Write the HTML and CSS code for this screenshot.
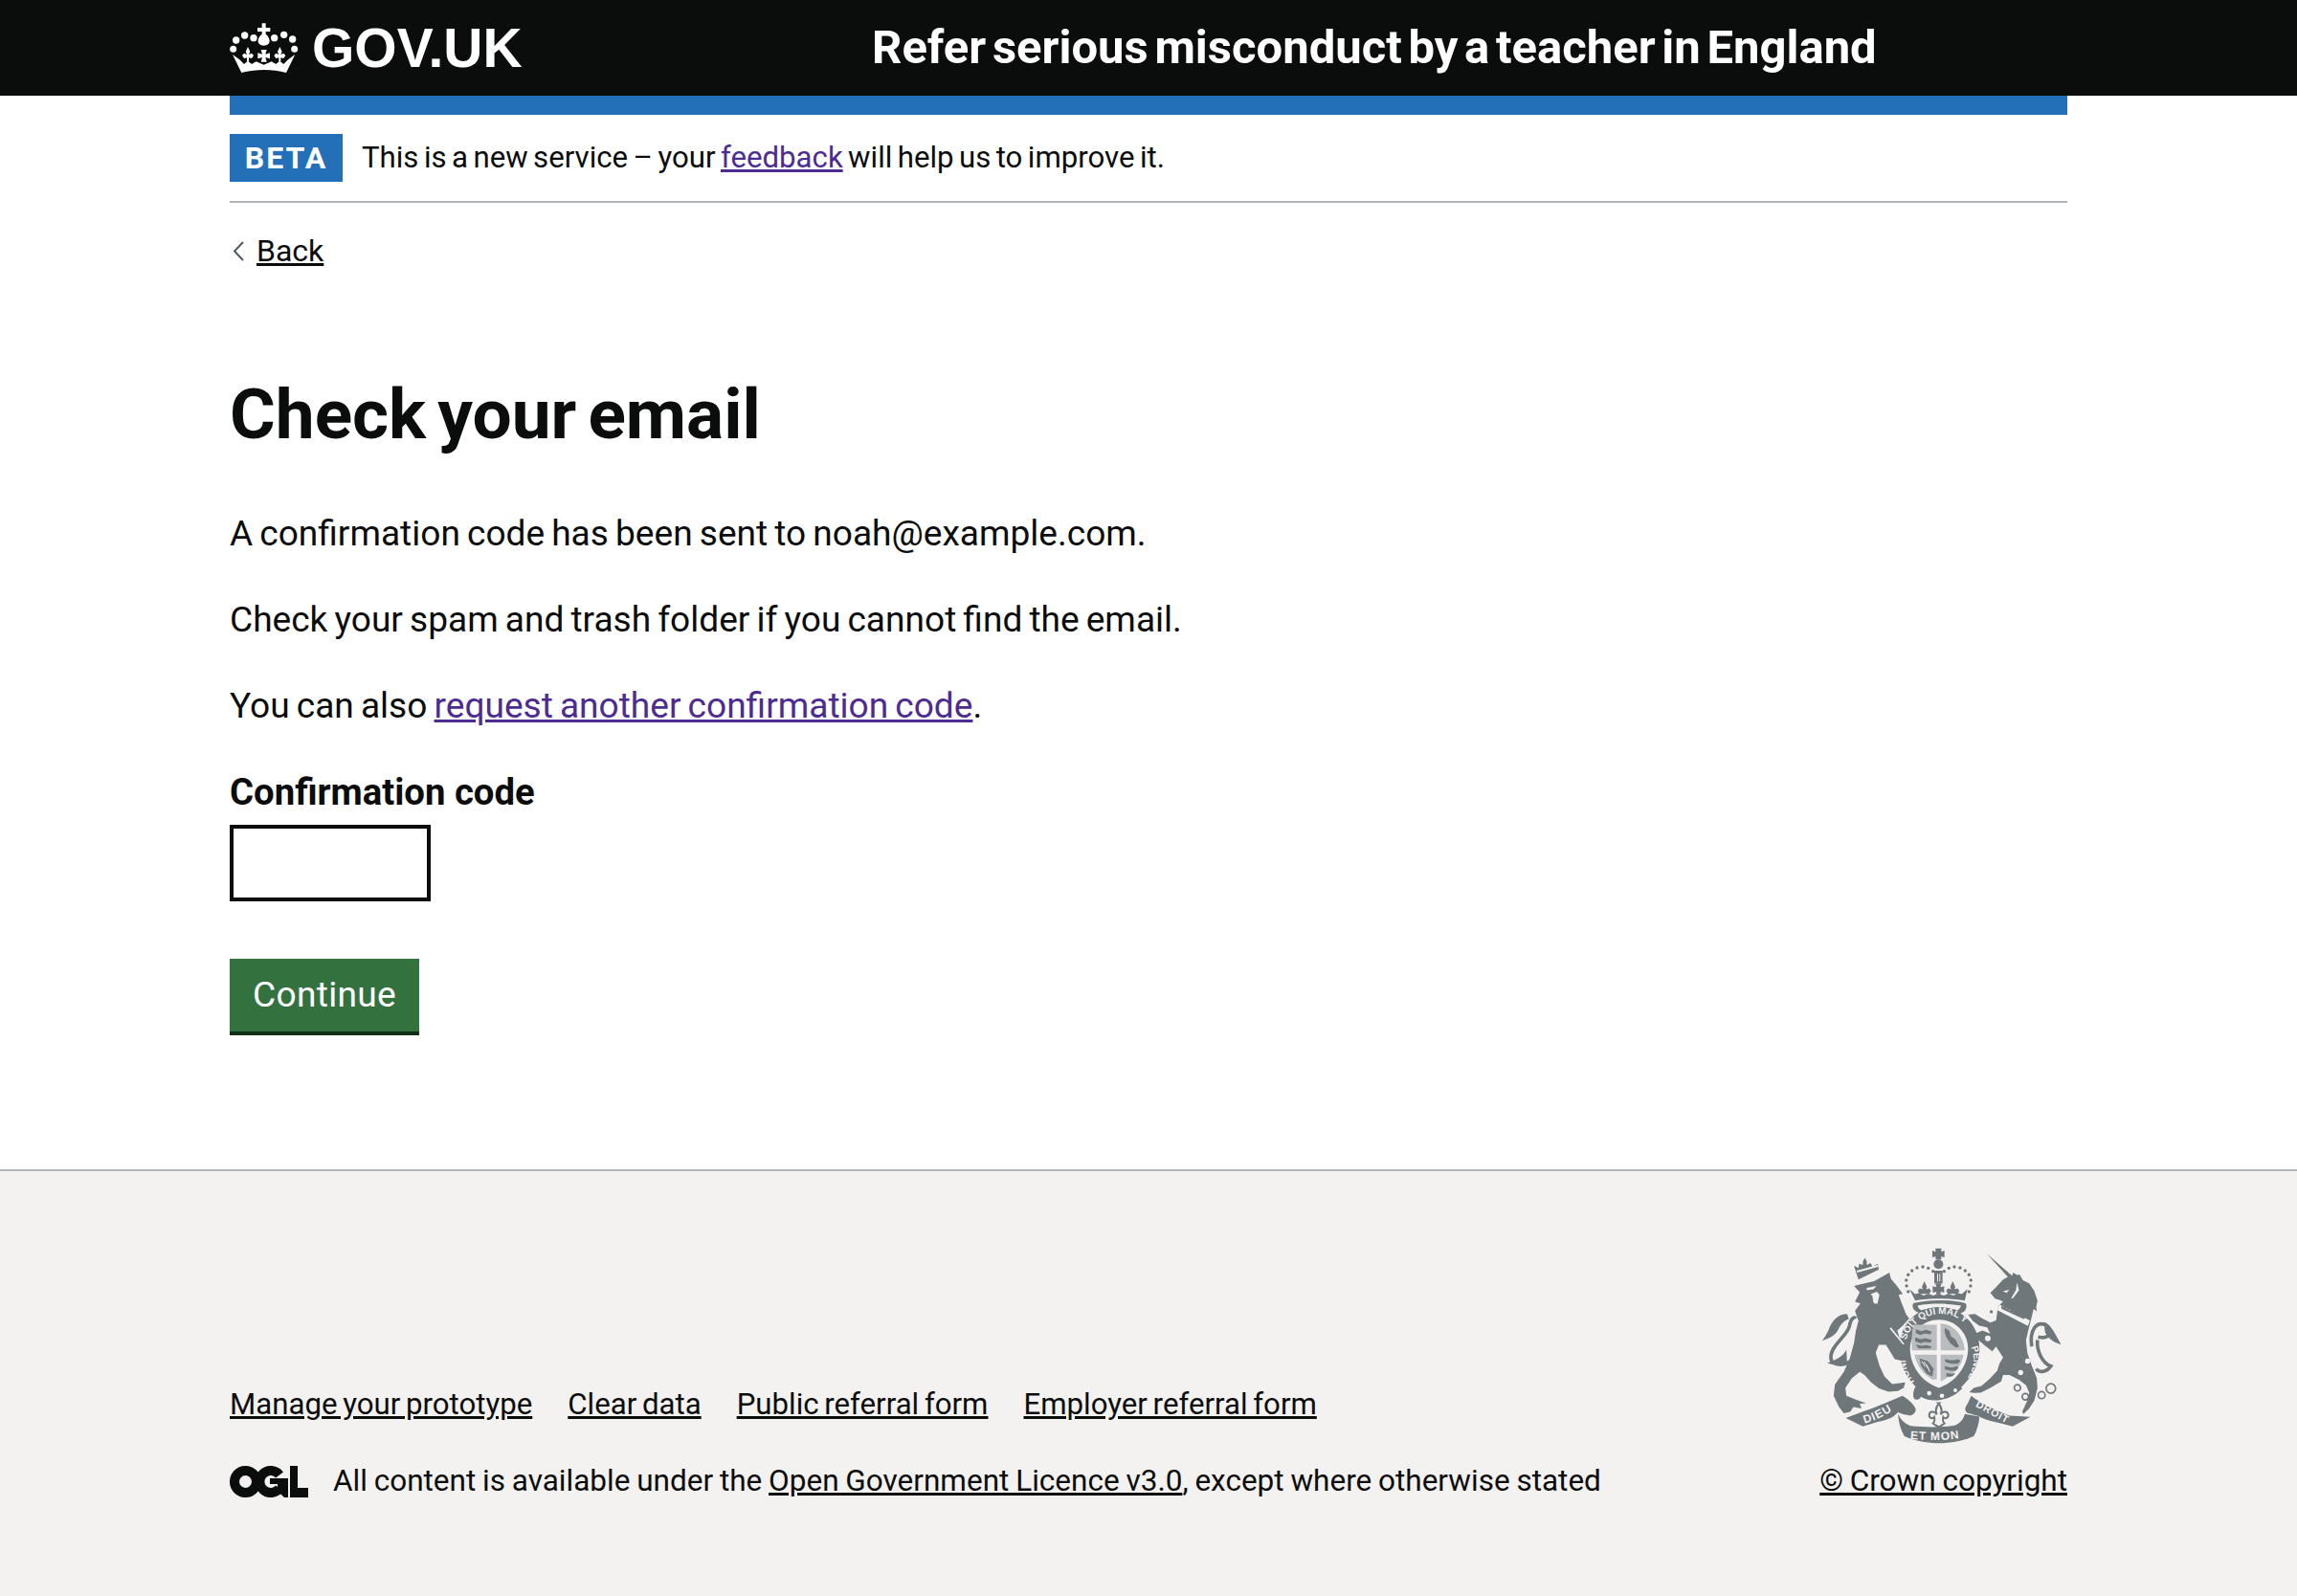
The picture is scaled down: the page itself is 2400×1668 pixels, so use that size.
FILE: index.html
```html
<!DOCTYPE html>
<html lang="en">
<head>
    <meta charset="UTF-8">
    <title>Check your email - Refer serious misconduct by a teacher in England</title>
    <link rel="stylesheet" href="styles.css">
</head>
<body>

    <header class="site-header">
        <div class="wrap header-row">
            <a class="logo" href="#">
                <svg class="crown" viewBox="15 21 216 156" aria-hidden="true">
                    <circle cx="35" cy="75" r="11"/><circle cx="62" cy="60" r="11"/><circle cx="90" cy="68" r="11"/>
                    <circle cx="155" cy="68" r="11"/><circle cx="185" cy="58" r="11"/><circle cx="212" cy="72" r="11"/>
                    <circle cx="26" cy="103" r="10.500"/><circle cx="218" cy="103" r="10.500"/>
                    <path d="M116 22h12v14h14v12h-14v8c8 6 12 14 12 22 0 8-8 14-18 14s-18-6-18-14c0-8 4-16 12-22v-8h-14V36h14z"/>
                    <path d="M52 177C95 165 150 165 192 177L220 120 198 136 184 150 172 140 160 150 146 142 136 146 122 152 108 146 98 142 84 150 72 140 60 150 46 136 24 120Z"/>
                    <path d="M72 96l7 15-4 9 9-4 6 7-6 9-9-2v12h-6v-12l-9 2-6-9 6-7 9 4-4-9z"/>
                    <path d="M172 96l7 15-4 9 9-4 6 7-6 9-9-2v12h-6v-12l-9 2-6-9 6-7 9 4-4-9z"/>
                    <path d="M113 105h18l-4 14 14-4v18l-14-4 4 14h-18l4-14-14 4v-18l14 4z"/>
                </svg>
                <span>GOV.UK</span>
            </a>
            <a class="service-name" href="#">Refer serious misconduct by a teacher in England</a>
        </div>
    </header>

    <div class="wrap">
        <div class="blue-bar"></div>
        <div class="phase-banner">
            <strong class="tag">BETA</strong>
            <span>This is a new service – your <a class="link" href="#">feedback</a> will help us to improve it.</span>
        </div>
        <div class="back">
            <svg class="chevron" viewBox="0 0 12 21" aria-hidden="true"><path d="M11 1 2 10.500 11 20"/></svg>
            <a href="#">Back</a>
        </div>

        <main class="content">
            <h1>Check your email</h1>
            <p>A confirmation code has been sent to noah@example.com.</p>
            <p>Check your spam and trash folder if you cannot find the email.</p>
            <p>You can also <a class="link" href="#">request another confirmation code</a>.</p>
            <form>
                <label for="code">Confirmation code</label>
                <input type="text" id="code" name="code">
                <button type="submit">Continue</button>
            </form>
        </main>
    </div>

    <footer class="site-footer">
        <div class="wrap footer-row">
            <div class="footer-main">
                <ul class="footer-links">
                    <li><a href="#">Manage your prototype</a></li>
                    <li><a href="#">Clear data</a></li>
                    <li><a href="#">Public referral form</a></li>
                    <li><a href="#">Employer referral form</a></li>
                </ul>
                <div class="licence">
                    <svg class="ogl" viewBox="0 0 82 33" aria-hidden="true">
                        <circle class="ogl-ring" cx="16.500" cy="16.500" r="11.500"/>
                        <path class="ogl-ring" d="M52 9.500A11.500 11.500 0 1 0 52 23.500"/>
                        <path d="M42 13h19v20h-4l-3-3-4-2v-9h-8z"/>
                        <path d="M63 0h8v23h11v10H63z"/>
                    </svg>
                    <span>All content is available under the <a href="#">Open Government Licence v3.0</a>, except where otherwise stated</span>
                </div>
            </div>
            <div class="footer-crest">
                <svg class="crest" viewBox="70 40 756 616" aria-hidden="true">
                    <!-- royal crown -->
                    <path d="M428 42h18v11l10-4v22l-10-4v10h-18V67l-10 4V49l10 4z"/>
                    <circle cx="437" cy="92" r="15"/>
                    <path d="M424 112h26v40h-26z"/>
                    <path class="crest-light" d="M433 122h3v24h-3zM440 122h3v24h-3z"/>
                    <g>
                        <circle cx="342" cy="178" r="5"/><circle cx="337" cy="160" r="5"/><circle cx="336" cy="142" r="5"/><circle cx="342" cy="125" r="5"/><circle cx="354" cy="112" r="5"/><circle cx="370" cy="103" r="5"/><circle cx="388" cy="100" r="5"/><circle cx="405" cy="104" r="5"/><circle cx="420" cy="114" r="5"/>
                        <circle cx="455" cy="114" r="5"/><circle cx="470" cy="104" r="5"/><circle cx="487" cy="100" r="5"/><circle cx="505" cy="103" r="5"/><circle cx="521" cy="112" r="5"/><circle cx="533" cy="125" r="5"/><circle cx="539" cy="142" r="5"/><circle cx="538" cy="160" r="5"/><circle cx="533" cy="178" r="5"/>
                    </g>
                    <path d="M393 145l8 18-3 8 10-3 6 7-6 10h-30l-6-10 6-7 10 3-3-8zM482 145l8 18-3 8 10-3 6 7-6 10h-30l-6-10 6-7 10 3-3-8zM427 152h20l-4 12 12-3v20l-12-3 2 8h-16l2-8-12 3v-20l12 3z"/>
                    <path d="M346 170l18 16 12-4 14 8 16-6 14 6 17-6 17 6 14-6 16 6 14-8 12 4 18-16-8 36c-50-8-110-8-156 0z"/>
                    <path d="M358 214c50-12 112-12 164 0 6 8 2 20-4 26l-10 6c-40-14-88-14-130 0l-14-8c-8-6-10-16-6-24z"/>
                    <path class="crest-light" d="M372 222c40-8 92-8 136 0-2 6-4 10-10 14-36-10-80-10-116 0-6-4-10-8-10-14z"/>
                    <!-- garter and shield -->
                    <path d="M438 226c72 0 128 58 128 130 0 40-16 78-46 110-20 24-48 44-82 50-30-6-58-24-80-48-28-32-44-70-44-112 0-72 54-130 124-130z"/>
                    <path class="crest-light" d="M438 266c50 0 92 40 92 92 0 50-36 104-92 122-56-18-90-72-90-122 0-52 42-92 90-92z"/>
                    <path class="crest-quarter" d="M358 282h74v80h-78c-2-30 0-56 4-80zM444 278c36 2 70 30 76 84h-76zM362 376h70v78h-14c-28-16-50-44-56-78zM444 376h72c-4 32-28 62-72 84z"/>
                    <path d="M366 296l18 6 14-4 18 6-4 8-18-2-14 4-14-6zM364 322l18 6 14-4 20 6-4 8-18-2-14 4-16-6zM366 344l18 4 14-2 18 4-4 6H374zM458 292l14 10 4 16 14 10 12 22-10 4-18-14-12-18-6-18zM456 390l24 4 20-4 6 6-8 8-20 0-18-4zM456 412l22 4 18-4 4 6-8 8-18 0-16-4zM462 434l16 2 12-2-6 8-10 4-12-2zM378 388l26 8 18 24-4 24-18-8-18-26z"/>
                    <path class="crest-cut" d="M384 396l12 18M392 398l14 22M400 408l10 22"/>
                    <path d="M364 478c10-10 30-8 44 2 24 14 62 12 92-8l12 10c-30 34-90 50-130 26-4 6-8 12-18 8-10-6-6-26 0-38z"/>
                    <circle class="crest-light" cx="408" cy="497" r="7"/><circle class="crest-light" cx="448" cy="505" r="7"/><circle class="crest-light" cx="490" cy="488" r="6"/>
                    <g class="crest-motto">
                        <path id="garter-top" class="crest-none" d="M336 330A112 112 0 0 1 552 330"/>
                        <path id="garter-side" class="crest-none" d="M540 352A100 100 0 0 1 508 470"/>
                        <path id="garter-left" class="crest-none" d="M362 460A104 104 0 0 1 334 390"/>
                        <text><textPath href="#garter-top">SOIT QUI MAL Y</textPath></text>
                        <text><textPath href="#garter-side">PENSE</textPath></text>
                        <text><textPath href="#garter-left">HONI</textPath></text>
                    </g>
                    <!-- lion -->
                    <path d="M186 140L178 116 172 96 186 104 188 90 200 94 200 82 206 72 212 82 212 94 224 88 230 100 246 90 250 108Z"/>
                    <path class="crest-light" d="M180 112L246 94 247 100 182 118Z"/>
                    <path d="M172 160L205 152 235 145 262 130 283 118 288 138 305 158 325 185 312 188 322 215 335 248 345 262 325 285 308 300 320 340 345 368 342 388 325 395 300 390 285 365 272 345 250 345 240 370 252 410 268 445 292 468 333 463 328 480 310 490 280 492 250 482 225 462 205 440 190 430 165 450 145 480 148 505 180 518 210 528 190 530 196 545 170 540 160 555 140 560 125 540 108 505 112 470 140 430 158 390 172 340 178 300 186 270 175 238 192 215 175 210 190 180Z"/>
                    <path class="crest-light" d="M212 166l30-6-8 10-22 4zM224 186l20-8 8 10-6 26c-6 4-12 2-14-6l-2-16zM288 290l42 52-4 2-42-50z"/>
                    <path class="crest-stroke" d="M170 385C150 415 112 412 100 392C92 350 150 320 158 285C162 262 172 255 178 262"/>
                    <path d="M150 248c-26 0-44 18-54 40-4 14-12 28-24 44 26-8 42-18 50-34 8-18 20-30 34-34z"/>
                    <path d="M148 360c-10 22-30 30-60 42 22 8 48 8 62-4z"/>
                    <!-- unicorn -->
                    <path d="M588 58L668 128 672 118 684 126 692 124 702 142 722 152 738 176 748 206 744 226 746 240 736 232 730 256 722 288 712 330 716 370 730 410 746 450 748 480 738 520 722 545 704 562 700 555 716 520 722 495 712 472 690 455 660 440 640 440 634 460 600 480 570 495 548 496 534 494 548 480 572 474 598 452 622 426 628 405 640 385 618 350 606 365 580 345 560 328 552 310 575 300 600 310 590 290 565 285 545 270 530 250 552 248 575 262 600 275 618 268 622 240 626 222 640 210 632 205 615 200 600 182 620 162 640 140 655 132Z"/>
                    <circle class="crest-light" cx="603" cy="241" r="10"/>
                    <circle cx="603" cy="241" r="5"/>
                    <circle class="crest-light" cx="592" cy="325" r="9"/>
                    <circle class="crest-light" cx="725" cy="351" r="10"/>
                    <circle class="crest-light" cx="717" cy="396" r="8"/>
                    <circle class="crest-light" cx="695" cy="432" r="8"/>
                    <path class="crest-light" d="M628 218l96 50-6 18-96-50zM640 176l20-4-10 10zM684 150l6 24-20 26-4-2 14-24z"/>
                    <path d="M634 226l4-8 2 10 8-6 2 10 8-6 2 12 10-6 2 10 10-4 2 10 10-4 2 10 10-4 4 10-6 4-68-32z"/>
                    <path class="crest-stroke" d="M730 350C722 300 745 270 772 282C800 296 790 330 750 320"/>
                    <path d="M768 274c18 4 30 26 54 70-22-6-38-16-50-38z"/>
                    <path class="crest-stroke" d="M748 330C745 360 760 400 790 412C778 430 755 435 744 420"/>
                    <circle class="crest-ring" cx="685" cy="480" r="10"/>
                    <circle class="crest-ring" cx="710" cy="508" r="10"/>
                    <circle class="crest-ring" cx="761" cy="503" r="11"/>
                    <circle class="crest-ring" cx="790" cy="482" r="15"/>
                    <!-- ribbon -->
                    <path d="M146 575l58-22c42-14 88-34 120-48 24 14 40 32 42 44-2 10-8 16-18 18-12-2-26-4-38-10-10 10-20 22-64 30l-46 14z"/>
                    <path d="M540 505c34 26 72 44 120 62l66 4-56 30-46-12c-22-4-40-8-60-20-12-2-22-8-36-10-12-10-6-20 0-28z"/>
                    <path d="M310 562c10 20 22 30 40 38 44 4 94 6 138-2 20-8 28-22 32-36l46 8c-2 22-8 44-18 62-60 28-150 30-218 0-12-22-18-44-20-70z"/>
                    <path class="crest-outline" d="M436 528c10 10 14 22 8 36 6-12 24-12 24 2 0 10-12 12-16 6-2 8-2 14 4 20l-18 12-18-12c6-6 6-12 4-20-4 6-16 4-16-6 0-14 18-14 24-2-6-14-2-26 8-36z"/>
                    <g class="crest-motto">
                        <path id="ribbon-left" class="crest-none" d="M205 592C250 580 290 556 322 530"/>
                        <path id="ribbon-mid" class="crest-none" d="M348 640C390 646 480 646 526 634"/>
                        <path id="ribbon-right" class="crest-none" d="M552 538C590 558 625 578 660 596"/>
                        <text class="crest-ribbon-text"><textPath href="#ribbon-left">DIEU</textPath></text>
                        <text class="crest-ribbon-text"><textPath href="#ribbon-mid">ET MON</textPath></text>
                        <text class="crest-droit"><textPath href="#ribbon-right">DROIT</textPath></text>
                    </g>
                </svg>
                <a href="#">© Crown copyright</a>
            </div>
        </div>
    </footer>

</body>
</html>
```

FILE: styles.css
```css
* {
    box-sizing: border-box;
}
body {
    margin: 0;
    font-family: Roboto, Arial, sans-serif;
    font-size: 37.1px;
    line-height: 50px;
    word-spacing: -2.1px;
    color: #0b0c0c;
    background-color: #fff;
}
a {
    color: #0b0c0c;
}
.wrap {
    width: 1920px;
    margin: 0 auto;
}

/* header */
.site-header {
    height: 100px;
    background-color: #0b0c0c;
}
.header-row {
    display: flex;
    align-items: center;
    height: 100px;
}
.logo {
    display: flex;
    align-items: center;
    gap: 14px;
    width: 671px;
    color: #fff;
    font-family: "Liberation Sans", Arial, sans-serif;
    font-weight: bold;
    font-size: 57px;
    word-spacing: 0;
    text-decoration: none;
}
.crown {
    width: 72px;
    height: 52px;
    fill: #fff;
}
.service-name {
    color: #fff;
    font-size: 49px;
    font-weight: bold;
    word-spacing: -5.5px;
    text-decoration: none;
    white-space: nowrap;
}
.blue-bar {
    height: 20px;
    background-color: #2470b8;
}

/* phase banner */
.phase-banner {
    display: flex;
    align-items: center;
    gap: 20px;
    height: 92px;
    border-bottom: 2px solid #b1b4b6;
    font-size: 31.2px;
    word-spacing: -2.3px;
}
.tag {
    width: 118px;
    height: 50px;
    background-color: #2470b8;
    color: #fff;
    font-size: 32px;
    line-height: 50px;
    text-align: center;
    letter-spacing: 2px;
}
.link {
    color: #4c2c92;
}
.back {
    display: flex;
    align-items: center;
    gap: 13px;
    margin-top: 30px;
    padding-left: 3px;
    font-size: 32px;
    line-height: 40px;
}
.chevron {
    width: 12px;
    height: 21px;
    fill: none;
    stroke: #505a5f;
    stroke-width: 2;
}

/* main */
.content {
    padding-top: 106px;
}
h1 {
    margin: 0 0 55px;
    font-size: 73px;
    line-height: 90px;
    font-weight: bold;
    word-spacing: -6px;
}
p {
    margin: 0 0 40px;
}
label {
    display: block;
    margin-bottom: 9px;
    font-size: 38.3px;
    font-weight: bold;
    word-spacing: 0;
}
input {
    display: block;
    width: 210px;
    height: 80px;
    margin-bottom: 60px;
    border: 4px solid #0b0c0c;
    background-color: #fff;
}
button {
    display: block;
    width: 198px;
    height: 80px;
    padding: 0;
    border: none;
    border-bottom: 4px solid #122f1a;
    background-color: #33723f;
    color: #fff;
    font: inherit;
    letter-spacing: 0.3px;
}

/* footer */
.site-footer {
    margin-top: 140px;
    height: 446px;
    border-top: 2px solid #b1b4b6;
    background-color: #f3f2f1;
    font-size: 31.5px;
    word-spacing: -1px;
}
.footer-row {
    display: flex;
    justify-content: space-between;
    align-items: flex-end;
    padding-top: 80px;
}
.footer-links {
    display: flex;
    gap: 37px;
    margin: 0 0 30px;
    padding: 0;
    list-style: none;
    font-size: 31.2px;
    word-spacing: -2px;
}
.licence {
    display: flex;
    align-items: center;
    gap: 26px;
}
.ogl {
    width: 82px;
    height: 33px;
    fill: #0b0c0c;
}
.ogl-ring {
    fill: none;
    stroke: #0b0c0c;
    stroke-width: 10;
}
.footer-crest {
    display: flex;
    flex-direction: column;
    align-items: flex-end;
    gap: 14px;
}

/* crest */
.crest {
    width: 252px;
    height: 205px;
    margin-right: 5px;
    fill: #6f777b;
}
.crest .crest-light {
    fill: #f3f2f1;
}
.crest .crest-quarter {
    fill: #b9bdbf;
}
.crest-none {
    fill: none;
}
.crest-cut {
    fill: none;
    stroke: #f3f2f1;
    stroke-width: 3;
}
.crest-stroke {
    fill: none;
    stroke: #6f777b;
    stroke-width: 11;
}
.crest-ring {
    fill: none;
    stroke: #6f777b;
    stroke-width: 5;
}
.crest-outline {
    fill: #f3f2f1;
    stroke: #6f777b;
    stroke-width: 6;
}
.crest-motto text {
    fill: #f3f2f1;
    font-family: "Liberation Sans", Arial, sans-serif;
    font-size: 30px;
    font-weight: bold;
}
.crest-motto .crest-ribbon-text {
    font-size: 36px;
    letter-spacing: 3px;
}
.crest-motto .crest-droit {
    font-size: 32px;
    letter-spacing: 3px;
}
```
